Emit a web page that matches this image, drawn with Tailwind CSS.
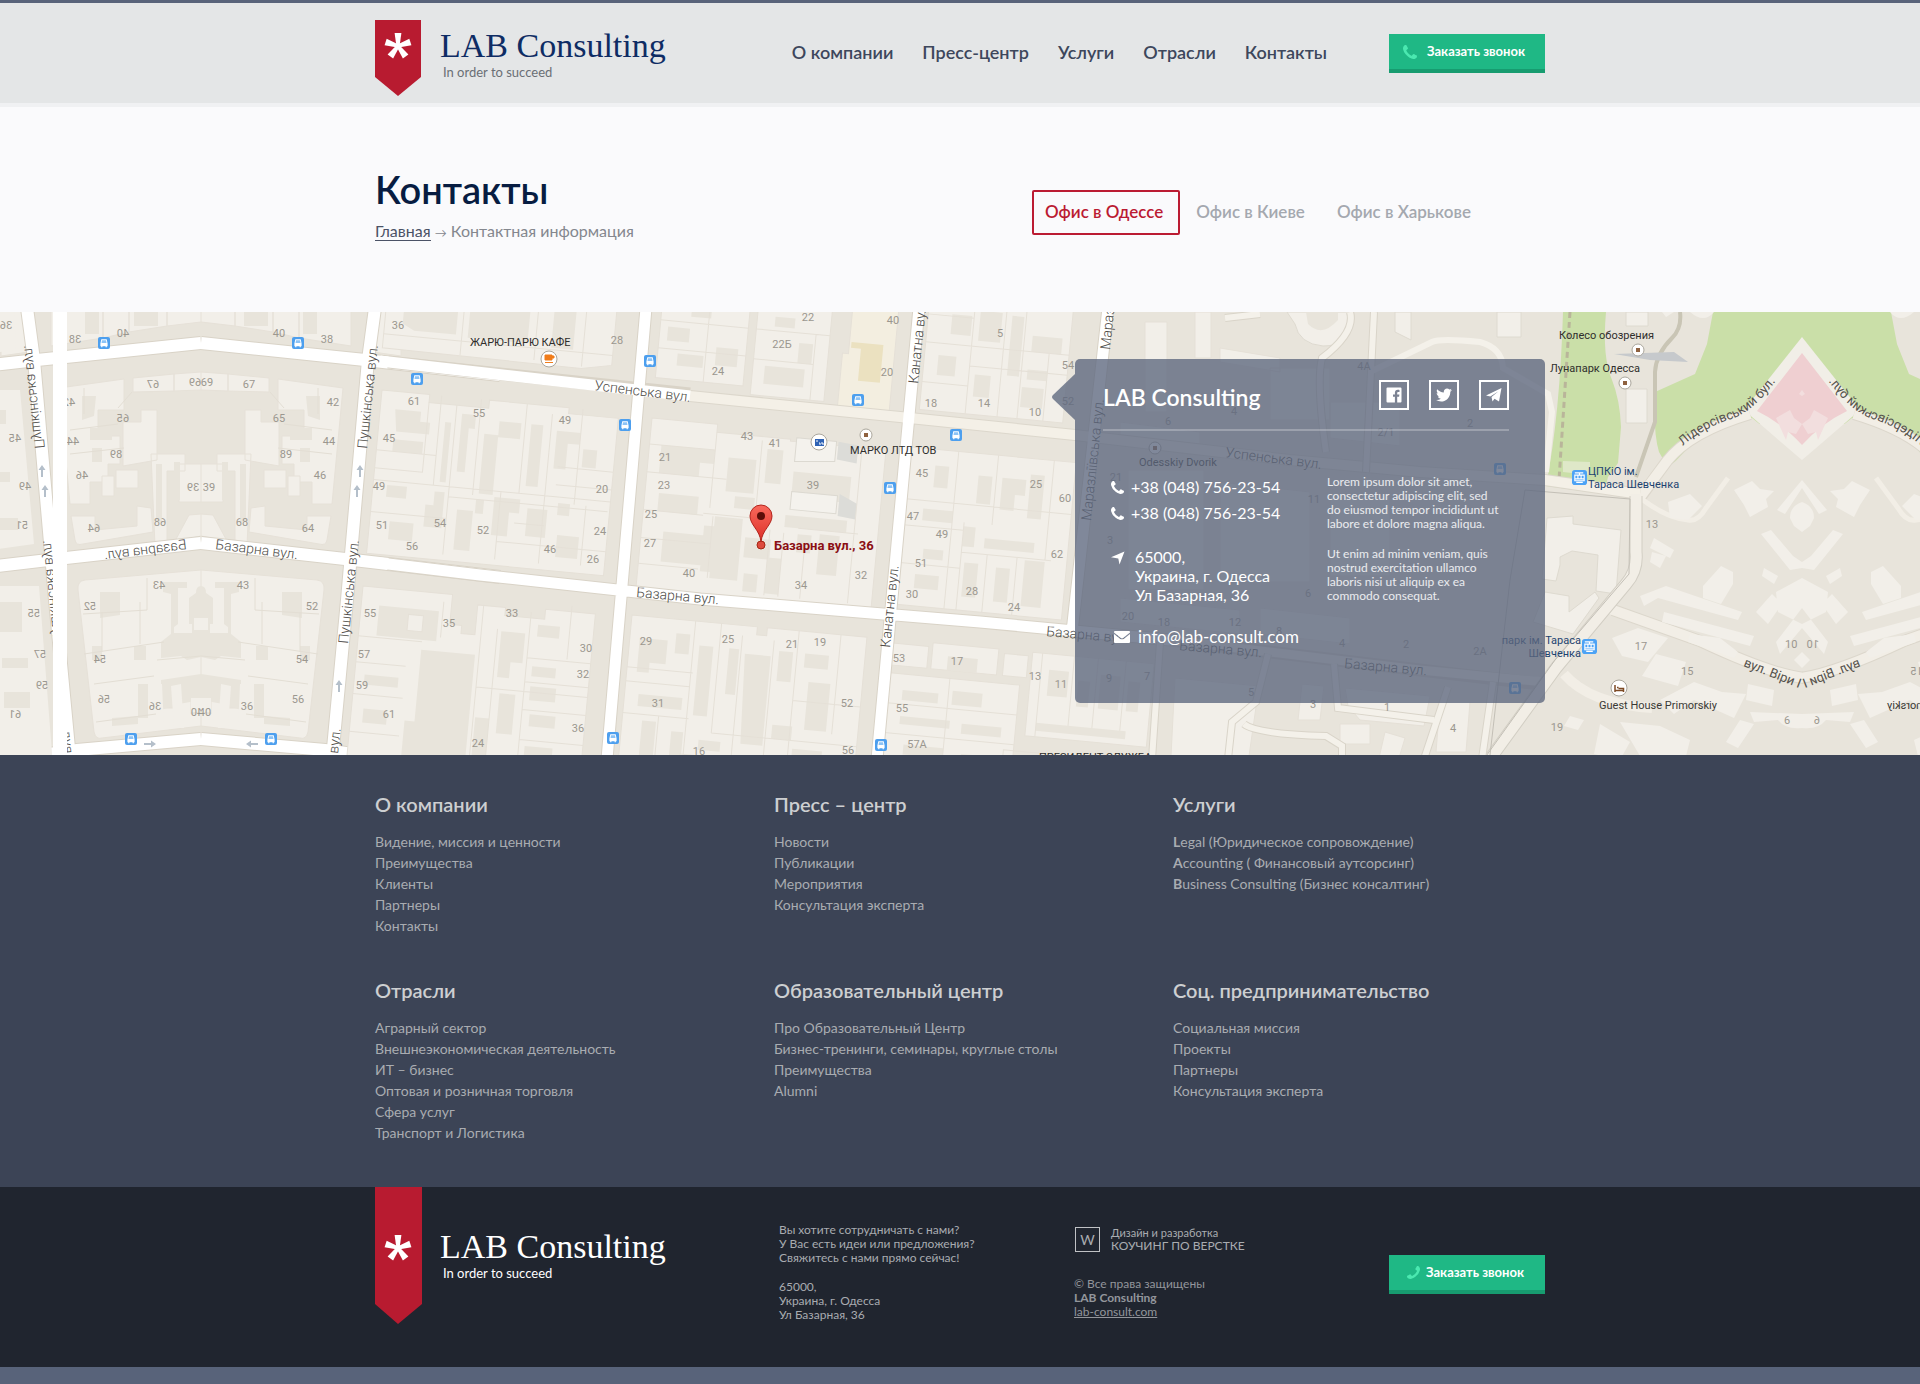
<!DOCTYPE html>
<html lang="ru">
  <head>
    <meta charset="UTF-8" />
    <meta name="viewport" content="width=device-width, initial-scale=1.0" />
    <title>Контакты - LAB Consulting</title>
    <script src="https://cdn.jsdelivr.net/npm/@tailwindcss/browser@4"></script>
  </head>
  <body class="bg-[#fafafc] font-[Lato,'Open_Sans',sans-serif] text-[#3d475c]">
    <!-- Shared icons -->
    <svg class="hidden">
      <symbol id="phone" viewBox="0 0 1408 1408">
        <path d="M1408 1112q0 27-10 70.5t-21 68.5q-21 50-122 106-94 51-186 51-27 0-53-3.5t-57.5-12.5-47-14.5-55.5-20.5-49-18q-98-35-175-83-127-79-264-216t-216-264q-48-77-83-175-3-9-18-49t-20.5-55.5-14.5-47-12.5-57.5-3.5-53q0-92 51-186 56-101 106-122 25-11 68.5-21t70.5-10q14 0 21 3 18 6 53 76 11 19 30 54t35 63.5 31 53.5q3 4 17.5 25t21.5 35.5 7 28.5q0 20-28.5 50t-62 55-62 53-28.5 46q0 9 5 22.5t8.5 20.5 14 24 11.5 19q76 137 174 235t235 174q2 1 19 11.5t24 14 20.5 8.5 22.5 5q18 0 46-28.5t53-62 55-62 50-28.5q14 0 28.5 7t35.5 21.5 25 17.5q25 15 53.5 31t63.5 35 54 30q70 35 76 53 3 7 3 21z" />
      </symbol>
      <symbol id="star" viewBox="-14 -14 28 28">
        <path id="arm" d="M-1.6 0 -3.4-13H3.4L1.6 0z" />
        <use href="#arm" transform="rotate(72)" />
        <use href="#arm" transform="rotate(144)" />
        <use href="#arm" transform="rotate(216)" />
        <use href="#arm" transform="rotate(288)" />
      </symbol>
      <symbol id="bus" viewBox="0 0 12 12">
        <rect width="12" height="12" rx="2" fill="#4d9fee" />
        <path d="M3.3 2.2h5.4l.9 4.3v2.7h-.8v1H7.6v-1H4.4v1H3.2v-1h-.8V6.5z" fill="#fff" />
        <path d="M4 3.3h4l.5 2.7h-5z" fill="#8cc3f6" />
      </symbol>
      <symbol id="tram" viewBox="0 0 16 16">
        <rect width="16" height="16" rx="3" fill="#4da3f5" />
        <path d="M3 3h9M8 3v2M3 5.5h10v6H3zM6.3 5.5v4M9.7 5.5v4M3 9.5h10M4.5 13.2h7" fill="none" stroke="#fff" stroke-width="1.2" />
      </symbol>
      <symbol id="poi" viewBox="0 0 14 14">
        <circle cx="7" cy="7" r="6" fill="#fff" stroke="#aaa69c" />
        <rect x="5" y="5" width="4" height="4" fill="#8f6240" />
      </symbol>
      <symbol id="oneway" viewBox="0 0 8 12">
        <path d="M4 0 7.5 5H5v7H3V5H.5z" fill="#b4bfca" />
      </symbol>
    </svg>

    <!-- Header -->
    <header class="border-t-3 border-t-[#58637a] border-b-4 border-b-[#f0f1f3] bg-[#e4e6e7]">
      <div class="mx-auto flex h-[100px] max-w-[1170px] items-start">
        <a href="#" class="flex pt-[17px]">
          <svg class="h-[76px] w-[46px]" viewBox="0 0 46 76">
            <path d="M0 0h46v57L23 76 0 57z" fill="#b81b30" />
            <use href="#star" x="9" y="12" width="28" height="28" fill="#fff" />
          </svg>
          <span class="block pt-[7px] pl-[19px]">
            <span class="block font-['Liberation_Serif',serif] text-[34px] leading-[38px] text-[#0e2c64]">LAB Consulting</span>
            <span class="block pl-[3px] text-[13px] leading-[14px] text-[#6a6f75]">In order to succeed</span>
          </span>
        </a>
        <nav class="mr-[62px] ml-auto flex gap-[29px] pt-[37px] text-[18px] leading-[24px] font-semibold">
          <a href="#">О компании</a>
          <a href="#">Пресс-центр</a>
          <a href="#">Услуги</a>
          <a href="#">Отрасли</a>
          <a href="#">Контакты</a>
        </nav>
        <button class="mt-[31px] flex h-[39px] w-[156px] items-center border-b-4 border-[#179c70] bg-[#1fb885] pl-[14px] text-[13px] font-bold text-white">
          <svg class="mr-[10px] size-[14px] fill-[#4be8b0]"><use href="#phone" /></svg>
          Заказать звонок
        </button>
      </div>
    </header>

    <main>
      <!-- Page title and office tabs -->
      <section class="mx-auto flex h-[205px] max-w-[1170px] items-start justify-between">
        <div class="pt-[59px]">
          <h1 class="text-[38px] leading-[46px] font-semibold text-[#071c41]">Контакты</h1>
          <p class="mt-[8px] text-[16px] leading-[22px] text-[#84878e]">
            <a href="#" class="border-b border-[#4b5266] text-[#4b5266]">Главная</a>
            <span class="text-[12px]">→</span>
            Контактная информация
          </p>
        </div>
        <div class="mt-[83px] flex pr-[58px] text-[17px] leading-[39px] font-semibold text-[#a4a8af]">
          <button class="rounded-xs border-2 border-[#bb1b32] pr-[15px] pb-[2px] pl-[11px] text-[#bb1b32]">Офис в Одессе</button>
          <button class="border-2 border-transparent px-[14px] pb-[2px]">Офис в Киеве</button>
          <button class="border-2 border-transparent px-[14px] pb-[2px]">Офис в Харькове</button>
        </div>
      </section>

      <!-- Map -->
      <section class="relative h-[443px] overflow-hidden bg-[#e8e4db]">
        <svg class="absolute inset-0 size-full font-[Roboto,sans-serif]" viewBox="0 0 1920 443" preserveAspectRatio="xMidYMid slice">
          <defs>
            <clipPath id="clip-west"><rect x="201" y="0" width="201" height="443" /></clipPath>
            <clipPath id="clip-east"><rect x="1640" y="0" width="162" height="443" /></clipPath>
            <path id="lid" d="M1683 134Q1700 118 1728 108 1752 102 1778 66" />
            <path id="viry" d="M1743 354 1804 378" />
            <linearGradient id="pin" x1="0" y1="0" x2="0" y2="1">
              <stop offset="0" stop-color="#f9695c" />
              <stop offset="1" stop-color="#dc2f28" />
            </linearGradient>
          </defs>

          <!-- West part, reflected at x = 201 -->
          <g id="west">
            <g fill="#f2efe9" stroke="#e6e1d8">
              <path d="M201-6h34v20l-34-4zM235-6h38v26l-38-6zM273-6h26v32l-26-6zM299-6h52v40l-52-8z" />
              <path d="M201 60l27 2v17l-27-1zM228 62l41 4v14l-41-1z" />
              <path d="M278 67l65 9-11 116h-20v-22h-18v-18h-12v-28h22V98h-26z" />
              <path d="M245 98h16v12h18v44l-34-6zM217 142h34l-4 92-12-3v-72h-18zM201 152h22v38h-22zM201 202l12 1 14 26-26-5zM264 158h22v18h-22zM288 164h12v20h-12z" />
              <path d="M251 196l14-2v20l42 4v-14h24l-4 24q-1 6-8 4l-70-12z" />
              <path d="M201 258l116 10q8 1 7 10l-16 142q-2 8-8 6l-99-12v-14l10 2v-16h18v10h12v-24l-40-8z" />
              <path d="M373-6h28v50l-28-4z" />
            </g>
            <g fill="#e8e4db">
              <path d="M306 84h14v24l-12-4zM290 116h22v12h-22zM222 150h6v38h-6zM240 152h6v58h-6zM300 136h10v14h-10zM244-6h24v20h-24zM303-2h14v24h-14z" />
              <path d="M201 274q5 0 5 7l7 5v26h-3v9h18v-6l-4-3v-36h-9v-6h24v10l-8 2v40l10 8v16l-20-2-6 4-14-3z" />
              <path d="M282 280h20v26l-20-3zM256 334h12v14h-12zM264 404l26 2v8l-26-2zM300 334h10v14h-10zM254 372h10v34h-10zM201 362l40 6v30l-18-6-22-4z" />
            </g>
            <path d="M201 386h10v14h-10zM221 372l10 2-3 42h-10zM240 372h9v44h-11zM201 306h7v12h-7z" fill="#f2efe9" />
            <g fill="none" stroke="#e3ded4">
              <path d="M255 266v32l64 4M238 330l80 12M248 364l60 8M262 290v42M201 344l44 4M300 300v40M270 80l14 16M284 112l48 6M278 136l54 6M318 76v26M246 402l60 8" />
            </g>
            <g fill="none" stroke="#d9d3c7" stroke-width="14">
              <path d="M201 31 365 48 500 63M201 231 345 247 500 265M201 427 325 438 402 449M375-4 368 48 347 288 332 447" />
            </g>
            <g fill="none" stroke="#fff" stroke-width="12">
              <path d="M201 31 365 48 500 63M201 231 345 247 500 265M201 427 325 438 402 449M375-4 368 48 347 288 332 447" />
            </g>
            <use href="#bus" x="292" y="25" width="12" height="12" />
            <use href="#bus" x="265" y="421" width="12" height="12" />
            <use href="#oneway" x="356" y="153" width="8" height="12" />
            <use href="#oneway" x="353" y="173" width="8" height="12" />
            <use href="#oneway" x="335" y="368" width="8" height="12" />
            <use href="#oneway" x="-4" y="-6" width="8" height="12" transform="translate(252 432) rotate(-90)" />
            <g font-size="11" fill="#9b978f" text-anchor="middle">
              <text x="279" y="25">40</text><text x="327" y="31">38</text><text x="207" y="74">69</text><text x="249" y="76">67</text>
              <text x="333" y="94">42</text><text x="279" y="110">65</text><text x="329" y="133">44</text><text x="286" y="146">89</text>
              <text x="320" y="167">46</text><text x="209" y="179">39</text><text x="242" y="214">68</text><text x="308" y="220">64</text>
              <text x="243" y="277">43</text><text x="312" y="298">52</text><text x="302" y="351">54</text><text x="298" y="391">56</text>
              <text x="247" y="398">36</text><text x="205" y="404">40</text>
            </g>
            <g font-size="14" font-weight="300" fill="#4d4b47">
              <text transform="translate(367 137) rotate(-84)">Пушкінська вул.</text>
              <text transform="translate(348 332) rotate(-84)">Пушкінська вул.</text>
              <text transform="translate(338 442) rotate(-84)">вул.</text>
              <text transform="translate(215 237) rotate(7)">Базарна вул.</text>
            </g>
          </g>

          <!-- City blocks, each laid out from its own north-west corner -->
          <g stroke="#e5e0d7">
            <g transform="translate(388 -24) rotate(5.4)">
              <path d="M0 0h230v56l-30 6-200-2z" fill="#f2efe9" />
              <path d="M18 0h54v40H30l-12-6zM84 0h60v42H84zM168 0h22v44h-22z" fill="#e8e4db" stroke="none" />
              <path d="M78 0v60M152 6v52M200 0v60M0 46h230" fill="none" />
            </g>
            <g transform="translate(382 78) rotate(5.4)">
              <path d="M0 0h48v8h60V0h80v6h50v158H0z" fill="#f2efe9" />
              <path d="M15 18h26v10h10v12H18zM82 16h14v14h-6v44h-8zM66 26h6v60h-6zM106 34h14v60h-14zM120 20h22v16h-22zM152 20h12v62h-12zM178 24h24v12h-12v26h-12zM16 48h30v12H16zM206 40h14v18h-14zM14 94h20v12H14zM20 130h24v18H20zM54 110h18v22H54zM62 96h10v14H62zM86 112h16v40H86zM122 96h26v14h-10v24h-16zM156 104h20v28h-20zM186 96h12v12h-12zM188 128h22v22h-22zM104 100h8v14h-8z" fill="#e8e4db" stroke="none" />
              <path d="M48 8v70h-48M60 0v90M76 8v150M100 0v96M128 90v68M146 0v90M172 8v150M202 0v96M0 60h60M0 90h238M0 122h76M76 100h160M128 140h110M182 60h56M182 78h56M214 96v60M144 120h30" fill="none" />
            </g>
            <g transform="translate(363 274) rotate(5.4)">
              <path d="M0 0h90v30h12v8h14v-30h28v8h40V6h50v176H116v-30h-16l-12 30H0z" fill="#f2efe9" />
              <path d="M18 18h60v30H18zM64 58h54v130H54V130h10zM10 88h34v10H10zM12 122h24v14H12zM142 32h24v30h-12v16h-12zM178 22h22v12h-22zM146 94h16v40h-16zM176 64h24v10h-24zM176 84h26v14h-26zM178 112h26v12h-26zM176 144h28v16h-28zM124 120h14v50h-14z" fill="#e8e4db" stroke="none" />
              <path d="M48 24h15v16H48z" fill="#f2efe9" />
              <path d="M0 50h64M0 76h50M0 108h50M0 146h50M82 8v36M122 8v170M138 30v150M170 10v170M122 90h112M170 56h64M170 80h64M170 108h64M170 138h64M210 0v54" fill="none" />
            </g>
            <g transform="translate(664 -26) rotate(5.4)">
              <path d="M0 0h88v92H0zM96 0h74v100H96z" fill="#f2efe9" />
              <path d="M190 0h46v104h-52V50h6z" fill="#f3eee0" />
              <path d="M30 10h20v18H30zM8 40h22v14H8zM58 56h22v18H58zM20 66h26v12H20zM114 20h20v10h-20zM108 70h40v18h-40zM140 44h14v20h-14z" fill="#e8e4db" stroke="none" />
              <path d="M192 38h32v38h-22V44h-10z" fill="#ebe1c0" stroke="none" />
              <path d="M48 0v92M0 34h88M0 62h88M96 34h74M96 64h60M156 34v66" fill="none" />
            </g>
            <g transform="translate(652 106) rotate(5.4)">
              <path d="M0 0h66v8h74v2h96v160H0z" fill="#f2efe9" />
              <path d="M12 26h54v14h-14v14H12zM80 32h28v34H80zM118 20h16v34h-16zM146 40h58v26h-58zM14 74h40v18H14zM90 70h20v12H90zM142 84h62v12h-62zM72 92h28v62H72v-6H62v-46h10zM104 110h26v20h-26zM22 112h42v30H22zM128 128h14v36h-14zM156 102h14v18h-14zM178 100h20v40h-20zM106 146h14v18h-14z" fill="#e8e4db" stroke="none" />
              <path d="M146 6h40v20l-40 4zM146 60h46v18h-46z" fill="#f4f2ed" stroke="#dcd9d1" />
              <path d="M188 6l20 2v18l-20-2zM194 58l18 8v16l-18-2z" fill="#dcdcd8" stroke="none" />
              <path d="M0 26h66M0 54h80M0 92h60M0 120h70M66 8v76M112 12v90M60 90h50M70 154V92M128 100v66M142 102v64M156 96h60M164 120v46M212 10v156M0 146h60" fill="none" />
            </g>
            <g transform="translate(632 303) rotate(5.4)">
              <path d="M0 0h126v8h10V0h100v180H0z" fill="#f2efe9" />
              <path d="M10 22h28v24H22v10H10zM46 14h14v20H46zM70 24h14v70H70zM100 24h10v46h-10zM116 28h26v90h-22zM150 22h14v30h-14zM176 22h24v14h-24zM182 50h22v48h-22zM14 78h44v12H14zM20 104h14v46H20zM50 112h12v34H50zM78 118h22v10H78zM150 96h20v14h-20zM172 118h30v14h-30zM106 142h22v12h-22zM140 132h16v22h-16zM184 144h24v18h-24z" fill="#e8e4db" stroke="none" />
              <path d="M0 52h66M0 66h64M64 0v180M90 0v110M112 10v150M144 12v130M168 0v180M210 0v100M0 98h66M90 110h146M168 70h68M60 134h176M36 98v82" fill="none" />
            </g>
            <g transform="translate(931 -26) rotate(5.4)">
              <path d="M0 0h144v124H0z" fill="#f2efe9" />
              <path d="M24 26h20v20H24zM52 20h22v30H52zM84 22h12v60H84zM106 40h30v16h-30zM14 68h18v20H14zM52 84h16v22H52zM104 74h20v10h-20zM100 92h22v20h-22z" fill="#e8e4db" stroke="none" />
              <path d="M46 0v124M78 0v124M98 0v124M0 56h144M0 96h46M46 76h98M124 56v68M0 28h46" fill="none" />
            </g>
            <g transform="translate(911 135) rotate(5.4)">
              <path d="M0 0h166v158H0z" fill="#f2efe9" />
              <path d="M26 16h14v22H26zM70 22h14v28H70zM94 22h24v16h-10v16H94zM122 16h14v44h-14zM18 60h30v12H18zM60 74h12v20H60zM82 84h50v10H82zM22 100h20v10H22zM64 110h14v34H64zM96 112h14v34H96zM124 102h20v46h-20zM16 126h24v14H16z" fill="#e8e4db" stroke="none" />
              <path d="M48 0v158M88 0v70M0 52h166M0 78h60M60 70v88M60 100h90M0 116h60M86 100v58M116 100v58M144 0v100" fill="none" />
            </g>
            <g transform="translate(893 331) rotate(5.4)">
              <path d="M0 0h36v22H0zM40-4h66v26H40zM112 0h24v22h-24zM140-4h122v84H140zM0 30h130v120H0z" fill="#f2efe9" />
              <path d="M56 8h30v14H56zM14 46h36v10H14zM64 42h30v14H64zM14 72h50v8H14zM76 74h40v10H76zM20 100h40v10H20zM78 104h40v10H78zM158 12h20v26h-20zM188 20h12v26h-12zM210 12h20v34h-20zM238 16h12v30h-12zM150 66h90v8h-90z" fill="#e8e4db" stroke="none" />
              <path d="M150-4v84M182-4v70M206-4v70M234-4v70M0 60h130M0 90h130M60 30v120M120 96h140v14H120z" fill="none" />
            </g>
            <!-- Blocks under the contact card -->
            <g fill="#f2efe9">
              <path d="M1145 10h22v90h-22zM1195 0h16v46h-16zM1270 56h60v52h-60zM1330 90h70v44l-70-8zM1220 36l60 10v14l-60-10zM1120 110l80 10v24l-80-12zM1128 158h76v120h-76zM1220 170l90 10v90h-90zM1330 184h60v80h-60zM1120 286l120 12v24l-120-12zM1260 296l90 10v26l-90-10z" />
              <path d="M1175 366l84 8-10 70h-78zM1302 372l22 2-4 34h-22zM1345 376l85 8-6 30-64-6-12-14zM1340 412h30v20h-30zM1440 390h30l-4 50h-30zM1385 420l20 6-6 20h-20z" />
            </g>
          </g>

          <!-- Parks and the eastern part, reflected at x = 1802 -->
          <path d="M1563 0h43q-4 45 6 68 8 20 9 47l-3 36-10 14-4 17-58-8q14-72 17-174z" fill="#cadfa8" />
          <path d="M1563 149l27 1v13l-27-3z" fill="#dfe8c8" />
          <path d="M1570 0 1559 168" fill="none" stroke="#b9b59a" stroke-width="3" stroke-dasharray="6 4" />
          <g fill="#f2efe9" stroke="#dedad0">
            <path d="M1497 0h24v25h-24zM1626 0h22v14h-22zM1626 77h21v34h-21zM1395 0h16v28l-16-8z" />
            <path d="M1293 0h58v12q-2 22-28 22-24-2-28-22l-8-12z" />
            <path d="M1547 206l26-2v8l48 6-5 64-20-3 2-36-26-4-12 6v8l-4 16-14-2zM1545 280l24 4v16l26-20 4 6-26 36-40-12z" />
          </g>
          <path d="M1306 0h32v8q-16 18-30 4z" fill="#e8e4db" />
          <g id="east">
            <path d="M1713 0h90v112h-52l-84 42-8-14q-6-20-4-60l40-18 12-30z" fill="#cadfa8" />
            <path d="M1662 0h12l-8 5zM1690 0h24q-10 12-24 0z" fill="#f2efe9" />
            <path d="M1667 158 1692 132Q1730 110 1752 106l50 40v60h-140z" fill="#e8e4db" />
            <path d="M1744 98 1802 25V148q-12-10-58-50z" fill="#f1eee7" />
            <path d="M1757 99 1802 41V133q-20-22-45-34z" fill="#efcfd1" />
            <path d="M1776 106l14-8 4 8 8 6-6 10-8-2-2 8zM1799 82l3-4v6z" fill="#f2dede" />
            <g fill="none" stroke="#dcd7cc" stroke-width="12">
              <path d="M1640 186 1667 149Q1690 120 1750 102M1613 298 1700 329Q1770 362 1804 366" />
            </g>
            <g fill="none" stroke="#f2eee6" stroke-width="10">
              <path d="M1638 188 1667 149Q1690 120 1750 102M1610 297 1700 329Q1770 362 1804 366" />
              <path d="M1638 184Q1665 206 1688 208 1698 210 1706 196L1728 166" stroke-width="5" />
              <path d="M1564 362Q1590 392 1652 396" />
            </g>
            <g fill="#f2efe9">
              <path d="M1734 178l18-9 8 8 14 2-8 8 2 8-18 10-6-12zM1668 190l22-8 12 12-14 14-18-2zM1777 198l25-30v8l-17 26zM1802 190q-12 4-12 16l4 8 8 6z" />
              <path d="M1761 222l10-4 22 26 9 6v6l-12 2zM1703 274l18-20 12 6v12l-12 20-18-6zM1776 280l26-14v46l-24-12zM1764 256l14 8-4 8-12-8zM1654 226l20 12-4 8-20-10zM1652 240l14 4-6 12-10-6zM1756 300l16-18 10 10-14 20zM1802 296 1776 330l4 12 22-26zM1802 340v16l-8-8z" />
              <path d="M1640 284l26-10 76 26-4 8-80-22-14 8zM1664 300l90 24-4 10-88-24zM1690 322l30 4 18 14-4 6-46-16zM1612 326l26-10 30 10-20 24-26-6zM1656 342l30 8-8 24-36-10zM1694 370l28 10 24 2-12 24-40-18-20 14-14-14zM1748 372l26 6-2 16-26-6zM1750 400l52 2v14q-16 2-24-8l-24 2zM1740 408l14 4-16 24-12-6zM1620 410l40 4 30 14-4 16h-46zM1570 404l14 4-6 10-14-4zM1600 412l30 18-10 18-26-6z" />
            </g>
            <g font-size="11" fill="#9b978f">
              <text x="1785" y="336">10</text><text x="1784" y="412">6</text><text x="1681" y="363">15</text>
            </g>
            <g font-size="13" fill="#55524c">
              <text><textPath href="#lid">Лідерсівський бул.</textPath></text>
              <text><textPath href="#viry">вул. Віри І</textPath></text>
            </g>
            <text x="1599" y="397" font-size="11" fill="#3a3936">Guest House Primorskiy</text>
          </g>
          <g transform="translate(3604 0) scale(-1 1)"><g clip-path="url(#clip-east)"><use href="#east" /></g></g>

          <!-- Streets -->
          <g fill="none">
            <g stroke="#d9d3c7" stroke-width="13">
              <path d="M388 50 690 82M388 252 480 263 700 287 980 310 1170 328 1420 358 1540 372M646-4 607 447M919-4 877 447M1108-4 1072 320" />
            </g>
            <path d="M690 84 900 105 1075 123 1290 148 1420 160 1545 168 1640 182" stroke="#dcd7cc" stroke-width="12" />
            <path d="M680 83 900 105 1075 123 1290 148 1420 160 1545 168 1640 182" stroke="#f4f0e7" stroke-width="10" />
            <path d="M380 49 690 84M380 251 480 263 700 287 980 310 1170 328M646-4 607 447M919-4 877 447M1108-4 1072 320" stroke="#fff" stroke-width="11" />
            <path d="M1170 328 1420 358 1545 370" stroke="#f4f0e7" stroke-width="9" />
            <path d="M1636 184 1636 240Q1638 258 1626 272L1556 356 1490 447" stroke="#d2cec4" stroke-width="13" />
            <path d="M1636 182 1636 240Q1638 258 1626 272L1556 356 1490 447" stroke="#f2eee6" stroke-width="11" />
            <path d="M1525 178 1630 187 1629 262 1555 348 1484 447M1525 178 1510 268 1490 443" stroke="#c3bfb6" />
            <path d="M1160 330 1152 447M1268 342 1256 390 1232 410 1228 447M1244 412Q1256 422 1326 424L1342 434V447M1334 352 1338 396 1434 408M1448 375 1424 447M1493 370 1482 447M1350 0Q1356 20 1322 46 1316 70 1326 140M1374 0 1366 160M1225 6 1260 2" stroke="#d9d4c9" stroke-width="8" />
            <path d="M1160 330 1152 447M1268 342 1256 390 1232 410 1228 447M1244 412Q1256 422 1326 424L1342 434V447M1334 352 1338 396 1434 408M1448 375 1424 447M1493 370 1482 447M1350 0Q1356 20 1322 46 1316 70 1326 140M1374 0 1366 160M1225 6 1260 2M1370 60 1432 30Q1440 26 1480 30 1502 36 1503 56L1548 82 1552 100 1546 160" stroke="#f4f1ea" stroke-width="6" />
            <path d="M1680 0Q1682 16 1672 26 1656 42 1655 60V110L1636 165" stroke="#c9c5b5" stroke-width="4" />
          </g>
          <path d="M1614 42l60-2 14 10-38-2z" fill="#c6c9cc" />

          <!-- House numbers -->
          <g font-size="11" fill="#9b978f" text-anchor="middle">
            <text x="398" y="17">36</text><text x="414" y="93">61</text><text x="479" y="105">55</text><text x="389" y="130">45</text>
            <text x="379" y="178">49</text><text x="382" y="217">51</text><text x="440" y="215">54</text><text x="483" y="222">52</text>
            <text x="412" y="238">56</text><text x="370" y="305">55</text><text x="449" y="315">35</text><text x="364" y="346">57</text>
            <text x="362" y="377">59</text><text x="389" y="406">61</text><text x="478" y="435">24</text>
            <text x="617" y="32">28</text><text x="808" y="9">22</text><text x="782" y="36">22Б</text><text x="718" y="63">24</text>
            <text x="893" y="12">40</text><text x="887" y="64">20</text><text x="931" y="95">18</text><text x="565" y="112">49</text>
            <text x="747" y="128">43</text><text x="775" y="135">41</text><text x="665" y="149">21</text><text x="664" y="177">23</text>
            <text x="813" y="177">39</text><text x="602" y="181">20</text><text x="651" y="206">25</text><text x="600" y="223">24</text>
            <text x="650" y="235">27</text><text x="550" y="241">46</text><text x="593" y="251">26</text><text x="689" y="265">40</text>
            <text x="801" y="277">34</text><text x="861" y="267">32</text><text x="922" y="165">45</text><text x="913" y="208">47</text>
            <text x="942" y="226">49</text><text x="921" y="255">51</text><text x="912" y="286">30</text><text x="972" y="283">28</text>
            <text x="512" y="305">33</text><text x="646" y="333">29</text><text x="728" y="331">25</text><text x="792" y="336">21</text>
            <text x="820" y="334">19</text><text x="586" y="340">30</text><text x="583" y="366">32</text><text x="578" y="420">36</text>
            <text x="658" y="395">31</text><text x="847" y="395">52</text><text x="899" y="350">53</text><text x="957" y="353">17</text>
            <text x="902" y="400">55</text><text x="917" y="436">57А</text><text x="848" y="442">56</text><text x="699" y="443">16</text>
            <text x="1000" y="25">5</text><text x="1068" y="57">54</text><text x="1068" y="93">52</text><text x="984" y="95">14</text>
            <text x="1035" y="104">10</text><text x="1036" y="176">25</text><text x="1065" y="190">60</text><text x="1057" y="246">62</text>
            <text x="1014" y="299">24</text><text x="1035" y="368">13</text><text x="1061" y="376">11</text>
            <text x="1109" y="370">9</text><text x="1147" y="368">7</text><text x="1251" y="384">5</text><text x="1313" y="396">3</text>
            <text x="1387" y="399">1</text><text x="1453" y="420">4</text><text x="1557" y="419">19</text><text x="1641" y="338">17</text>
            <text x="1652" y="216">13</text><text x="1364" y="58">4А</text><text x="1234" y="103">4</text><text x="1168" y="113">6</text>
            <text x="1386" y="124">2/1</text><text x="1470" y="115">2</text><text x="1116" y="169">21</text><text x="1110" y="232">3</text>
            <text x="1308" y="285">6</text><text x="1128" y="308">20</text><text x="1164" y="314">18</text><text x="1235" y="314">12</text>
            <text x="1279" y="323">8</text><text x="1342" y="335">4</text><text x="1406" y="336">2</text><text x="1480" y="343">2А</text>
            <text x="1314" y="191">11</text>
          </g>

          <!-- Street names -->
          <g font-size="14" font-weight="300" fill="#4d4b47">
            <text transform="translate(594 78) rotate(7)">Успенська вул.</text>
            <text transform="translate(636 285) rotate(5)">Базарна вул.</text>
            <text transform="translate(1046 324) rotate(5)">Базарна вул.</text>
            <text transform="translate(1179 338) rotate(5)">Базарна вул.</text>
            <text transform="translate(1344 356) rotate(5)">Базарна вул.</text>
            <text transform="translate(1225 145) rotate(7)">Успенська вул.</text>
            <text transform="translate(918 72) rotate(-84)">Канатна вул.</text>
            <text transform="translate(890 336) rotate(-84)">Канатна вул.</text>
            <text transform="translate(1110 38) rotate(-84)">Маразліївська вул.</text>
            <text transform="translate(1091 209) rotate(-84)">Маразліївська вул.</text>
          </g>

          <!-- Western reflection and the seam between the tiles -->
          <g transform="translate(402 0) scale(-1 1)"><g clip-path="url(#clip-west)">
            <rect x="201" width="201" height="443" fill="#e8e4db" />
            <use href="#west" />
            <g fill="#f2efe9">
              <path d="M382 78h30v160l-44-6zM363 274h60v180h-74zM388-4h30v46l-32-4z" />
              <path d="M396 98h20v14h-20zM392 160h18v10h-18zM384 206h30v12h-30zM380 290h30v30h-30zM374 346h26v10h-26zM372 380h26v16h-26z" fill="#e8e4db" />
            </g>
            <g font-size="11" fill="#9b978f" text-anchor="middle">
              <text x="396" y="17">36</text><text x="387" y="130">45</text><text x="377" y="178">49</text><text x="380" y="217">51</text>
              <text x="368" y="305">55</text><text x="362" y="346">57</text><text x="360" y="377">59</text><text x="387" y="406">61</text>
            </g>
          </g></g>
          <rect x="53" width="14" height="443" fill="#fff" />

          <!-- Places and stops -->
          <use href="#bus" x="411" y="61" width="12" height="12" />
          <use href="#bus" x="644" y="43" width="12" height="12" />
          <use href="#bus" x="619" y="107" width="12" height="12" />
          <use href="#bus" x="852" y="82" width="12" height="12" />
          <use href="#bus" x="950" y="117" width="12" height="12" />
          <use href="#bus" x="884" y="170" width="12" height="12" />
          <use href="#bus" x="607" y="420" width="12" height="12" />
          <use href="#bus" x="875" y="427" width="12" height="12" />
          <use href="#bus" x="1494" y="151" width="12" height="12" />
          <use href="#bus" x="1509" y="370" width="12" height="12" />
          <use href="#tram" x="1572" y="158" width="15" height="15" />
          <use href="#tram" x="1582" y="327" width="15" height="15" />
          <use href="#poi" x="859" y="116" width="14" height="14" />
          <use href="#poi" x="1148" y="129" width="14" height="14" />
          <use href="#poi" x="1631" y="31" width="14" height="14" />
          <use href="#poi" x="1618" y="64" width="14" height="14" />
          <circle cx="549" cy="47" r="8" fill="#fff" stroke="#aaa69c" />
          <path d="M545 43h7v5h-7zM552 44h2v2h-2M545 50.5h8" fill="#f07c1a" stroke="#f07c1a" />
          <circle cx="819" cy="130" r="8" fill="#fff" stroke="#aaa69c" />
          <path d="M815 127h9v7h-9z" fill="#2f63b5" />
          <path d="M816 129h2M819 131h1v2M821 131h2v2" fill="none" stroke="#fff" />
          <circle cx="1619" cy="376" r="8" fill="#fff" stroke="#aaa69c" />
          <path d="M1615 373v7M1615 378.5h9M1623.5 380v-3.5h-5M1617 375.5h1.5" fill="none" stroke="#7d4a24" stroke-width="1.5" />
          <g font-size="11" fill="#2f2e2c">
            <text x="470" y="34">ЖАРЮ-ПАРЮ КАФЕ</text>
            <text x="850" y="142">МАРКО ЛТД ТОВ</text>
            <text x="1139" y="154">Odesskiy Dvorik</text>
            <text x="1559" y="27">Колесо обозрения</text>
            <text x="1550" y="60">Лунапарк Одесса</text>
            <text x="1039" y="449">ПРЕЗИДЕНТ СЛУЖБА</text>
          </g>
          <g font-size="11" fill="#1d4370">
            <text x="1588" y="163">ЦПКіО ім.</text>
            <text x="1588" y="176">Тараса Шевченка</text>
            <text x="1581" y="332" text-anchor="end">парк ім. Тараса</text>
            <text x="1581" y="345" text-anchor="end">Шевченка</text>
          </g>
          <circle cx="761" cy="233" r="4" fill="#dd4b3e" stroke="#a52714" />
          <path d="M761 230c-1-12-11-17-11-26a11 11 0 0 1 22 0c0 9-10 14-11 26z" fill="url(#pin)" stroke="#b2251d" />
          <circle cx="761" cy="204" r="4" fill="#5b0d08" />
          <text x="774" y="238" font-size="13" font-weight="700" fill="#8b0f14">Базарна вул., 36</text>
        </svg>

        <!-- Contact card -->
        <div class="relative mx-auto flex max-w-[1170px] justify-end pt-[47px]">
          <div class="relative h-[344px] w-[470px] rounded-[5px] bg-[#5c667d]/78 pt-[21px] pr-[36px] pl-[28px] text-white">
            <svg class="absolute top-[15px] left-[-23px] h-[46px] w-[23px]" viewBox="0 0 23 46">
              <path d="M23 0v46L1 25q-2-2 0-4z" fill="#5c667d" fill-opacity=".78" />
            </svg>
            <div class="flex items-start justify-between border-b-2 border-white/25 pb-[17px]">
              <h2 class="pt-[2px] text-[23px] leading-[30px] font-semibold">LAB Consulting</h2>
              <div class="flex gap-[20px]">
                <a href="#" aria-label="Facebook" class="flex size-[30px] items-center justify-center border-2 border-white">
                  <svg class="size-[16px]" viewBox="0 0 16 16" fill="#fff">
                    <path d="M1.5.5h13a1 1 0 0 1 1 1v13a1 1 0 0 1-1 1h-3.300V9.800h1.900l.3-2.300h-2.200V6.100c0-.7.3-1.100 1.200-1.100h1.100V2.900c-.3 0-.9-.1-1.700-.1-1.800 0-2.900 1-2.900 2.900v1.800H7v2.300h1.900v5.700H1.500a1 1 0 0 1-1-1v-13a1 1 0 0 1 1-1z" />
                  </svg>
                </a>
                <a href="#" aria-label="Twitter" class="flex size-[30px] items-center justify-center border-2 border-white">
                  <svg class="size-[18px]" viewBox="0 0 1792 1792" fill="#fff">
                    <path d="M1684 408q-67 98-162 167 1 14 1 42 0 130-38 259.500t-115.500 248.500-184.500 210.500-258 146-323 54.500q-271 0-496-145 35 4 78 4 225 0 401-138-105-2-188-64.500t-114-159.500q33 5 61 5 43 0 85-11-112-23-185.500-111.500t-73.500-205.500v-4q68 38 146 41-66-44-105-115t-39-154q0-88 44-163 121 149 294.500 238.500t371.500 99.500q-8-38-8-74 0-134 94.500-228.500t228.500-94.500q140 0 236 102 109-21 205-78-37 115-142 178 93-10 186-50z" />
                  </svg>
                </a>
                <a href="#" aria-label="Telegram" class="flex size-[30px] items-center justify-center border-2 border-white">
                  <svg class="size-[16px]" viewBox="0 0 16 16" fill="#fff">
                    <path d="M0 8.5 15.5 1 13 14.5 8.5 11.8 6.5 14.5 5.5 10 12.5 4.3 4.3 9.6z" />
                  </svg>
                </a>
              </div>
            </div>
            <div class="flex justify-between pt-[44px]">
              <div class="pl-[8px] text-[16px]">
                <p class="flex items-center leading-[24px]">
                  <svg class="mr-[7px] size-[13px] fill-white"><use href="#phone" /></svg>+38 (048) 756-23-54
                </p>
                <p class="mt-[2px] flex items-center leading-[24px]">
                  <svg class="mr-[7px] size-[13px] fill-white"><use href="#phone" /></svg>+38 (048) 756-23-54
                </p>
                <div class="mt-[22px] flex leading-[19px]">
                  <svg class="mt-[4px] mr-[10px] size-[14px]" viewBox="0 0 14 14" fill="#fff">
                    <path d="M13.5.5 8.5 13.5 7.3 7.5 0 6.3z" />
                  </svg>
                  <p>65000,<br />Украина, г. Одесса<br />Ул Базарная, 36</p>
                </div>
                <p class="mt-[20px] flex items-center pl-[3px] text-[17px] leading-[26px]">
                  <svg class="mr-[8px] h-[12px] w-[16px]" viewBox="0 0 16 12" fill="#fff">
                    <path d="M1 0h14a1 1 0 0 1 1 1v.5L9.5 6.7q-1.500 1-3 0L0 1.500V1a1 1 0 0 1 1-1zM0 3l6 4.700q2 1.200 4 0L16 3v8a1 1 0 0 1-1 1H1a1 1 0 0 1-1-1z" />
                  </svg>
                  <a href="#">info@lab-consult.com</a>
                </p>
              </div>
              <div class="w-[182px] text-[12px] leading-[14px] whitespace-nowrap text-white/85">
                <p>Lorem ipsum dolor sit amet,<br />consectetur adipiscing elit, sed<br />do eiusmod tempor incididunt ut<br />labore et dolore magna aliqua.</p>
                <p class="mt-[16px]">Ut enim ad minim veniam, quis<br />nostrud exercitation ullamco<br />laboris nisi ut aliquip ex ea<br />commodo consequat.</p>
              </div>
            </div>
          </div>
        </div>
      </section>
    </main>

    <!-- Sitemap -->
    <section class="bg-[#3c4456] text-[#a9acb1]">
      <div class="mx-auto grid h-[432px] max-w-[1170px] grid-cols-[399px_399px_1fr] grid-rows-[186px_1fr] pt-[35px] text-[14px] leading-[21px]">
        <div>
          <h3 class="mb-[13px] text-[20px] leading-[28px] font-semibold text-[#cdcfd1]">О компании</h3>
          <ul>
            <li><a href="#">Видение, миссия и ценности</a></li>
            <li><a href="#">Преимущества</a></li>
            <li><a href="#">Клиенты</a></li>
            <li><a href="#">Партнеры</a></li>
            <li><a href="#">Контакты</a></li>
          </ul>
        </div>
        <div>
          <h3 class="mb-[13px] text-[20px] leading-[28px] font-semibold text-[#cdcfd1]">Пресс – центр</h3>
          <ul>
            <li><a href="#">Новости</a></li>
            <li><a href="#">Публикации</a></li>
            <li><a href="#">Мероприятия</a></li>
            <li><a href="#">Консультация эксперта</a></li>
          </ul>
        </div>
        <div>
          <h3 class="mb-[13px] text-[20px] leading-[28px] font-semibold text-[#cdcfd1]">Услуги</h3>
          <ul>
            <li><a href="#"><b>L</b>egal (Юридическое сопровождение)</a></li>
            <li><a href="#"><b>A</b>ccounting ( Финансовый аутсорсинг)</a></li>
            <li><a href="#"><b>B</b>usiness Consulting (Бизнес консалтинг)</a></li>
          </ul>
        </div>
        <div>
          <h3 class="mb-[13px] text-[20px] leading-[28px] font-semibold text-[#cdcfd1]">Отрасли</h3>
          <ul>
            <li><a href="#">Аграрный сектор</a></li>
            <li><a href="#">Внешнеэкономическая деятельность</a></li>
            <li><a href="#">ИТ – бизнес</a></li>
            <li><a href="#">Оптовая и розничная торговля</a></li>
            <li><a href="#">Сфера услуг</a></li>
            <li><a href="#">Транспорт и Логистика</a></li>
          </ul>
        </div>
        <div>
          <h3 class="mb-[13px] text-[20px] leading-[28px] font-semibold text-[#cdcfd1]">Образовательный центр</h3>
          <ul>
            <li><a href="#">Про Образовательный Центр</a></li>
            <li><a href="#">Бизнес-тренинги, семинары, круглые столы</a></li>
            <li><a href="#">Преимущества</a></li>
            <li><a href="#">Alumni</a></li>
          </ul>
        </div>
        <div>
          <h3 class="mb-[13px] text-[20px] leading-[28px] font-semibold text-[#cdcfd1]">Соц. предпринимательство</h3>
          <ul>
            <li><a href="#">Социальная миссия</a></li>
            <li><a href="#">Проекты</a></li>
            <li><a href="#">Партнеры</a></li>
            <li><a href="#">Консультация эксперта</a></li>
          </ul>
        </div>
      </div>
    </section>

    <!-- Footer -->
    <footer class="border-b-[17px] border-[#58637a] bg-[#20252f] text-[12px] text-[#a9acb1]">
      <div class="mx-auto grid h-[180px] max-w-[1170px] grid-cols-[404px_295px_1fr_156px] items-start">
        <a href="#" class="flex text-white">
          <svg class="h-[137px] w-[47px]" viewBox="0 0 47 137">
            <path d="M0 0h47v117L23 137 0 117z" fill="#b81b30" />
            <use href="#star" x="9" y="47" width="28" height="28" fill="#fff" />
          </svg>
          <span class="block pt-[41px] pl-[18px]">
            <span class="block font-['Liberation_Serif',serif] text-[34px] leading-[38px]">LAB Consulting</span>
            <span class="block pl-[3px] text-[13px] leading-[14px]">In order to succeed</span>
          </span>
        </a>
        <div class="pt-[36px] leading-[14px]">
          <p>Вы хотите сотрудничать с нами?<br />У Вас есть идеи или предложения?<br />Свяжитесь с нами прямо сейчас!</p>
          <p class="mt-[15px]">65000,<br />Украина, г. Одесса<br />Ул Базарная, 36</p>
        </div>
        <div class="pt-[39px]">
          <a href="#" class="flex items-center gap-[11px] pl-px">
            <span class="flex size-[25px] items-center justify-center border border-[#c0c2c5] text-[14px]">W</span>
            <span class="leading-[13px]"><span class="text-[11px]">Дизайн и разработка</span><br />КОУЧИНГ ПО ВЕРСТКЕ</span>
          </a>
          <p class="mt-[25px] leading-[14px] text-[#93969c]">© Все права защищены<br /><b>LAB Consulting</b><br /><a href="#" class="underline">lab-consult.com</a></p>
        </div>
        <button class="mt-[68px] flex h-[39px] w-[156px] items-center border-b-4 border-[#179c70] bg-[#1fb885] pl-[18px] text-[13px] font-bold text-white">
          <svg class="mr-[6px] size-[13px] -scale-x-100 fill-[#4be8b0]"><use href="#phone" /></svg>
          Заказать звонок
        </button>
      </div>
    </footer>
  </body>
</html>
